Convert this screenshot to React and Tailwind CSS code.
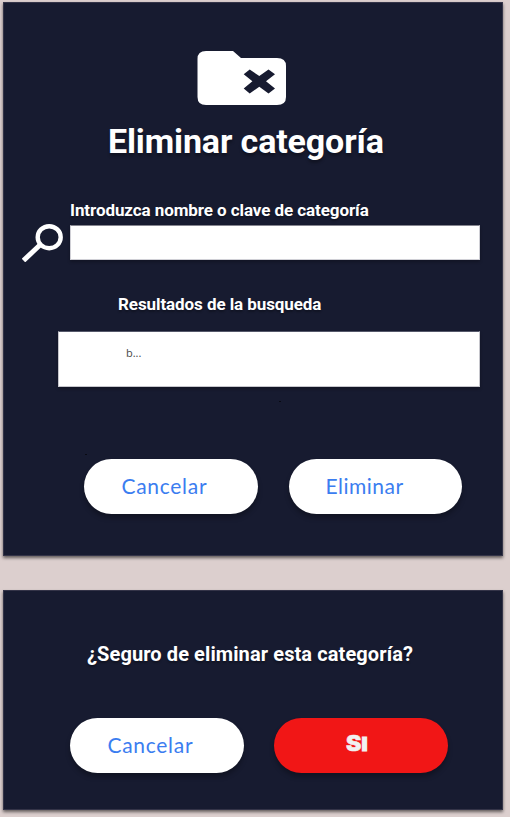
const panel =
  "w-[500px] bg-[#171b30] border border-[#343448] shadow-[0_2px_3px_rgba(0,0,0,0.55)]";
const pill =
  "h-[55px] w-[173.500px] rounded-full text-left shadow-[0_4px_5px_rgba(0,0,0,0.28)]";
const pillText =
  "font-['Lato'] text-[21px] leading-[54px] pb-[2px] text-[#3b7df0]";

function FolderIcon() {
  return (
    <svg className="ml-[193px] mt-[48px] block h-[54px] w-[90px]" viewBox="0 0 90 54">
      <path
        d="M9 0H36L44 7H80Q89 7 89 15V46Q89 54 80 54H9Q0.500 54 0.500 46V8Q0.500 0 9 0Z"
        fill="#fff"
      />
      <path
        d="M46.700 23.300L52.700 18.500L62.300 25L71.500 18.500L78 23.300L69 30.300L78 37.500L71.500 42.500L62.300 35.800L52.700 42.500L46.700 37.500L55.400 30.300Z"
        fill="#171b30"
      />
    </svg>
  );
}

function SearchIcon() {
  return (
    <svg className="mt-[2px] block h-[38px] w-[42px]" viewBox="0 0 42 38" fill="none" stroke="#fff">
      <ellipse cx="27.200" cy="13.200" rx="11.500" ry="11" strokeWidth="4.400" />
      <path d="M18.500 20.500L1.500 36.500" strokeWidth="5" />
    </svg>
  );
}

export default function App() {
  return (
    <main className="h-[817px] w-[510px] overflow-hidden bg-[#dccfce] pl-[3px] pt-[2px] font-['Roboto',sans-serif] text-white">
      <section className={`${panel} relative h-[554px]`}>
        <FolderIcon />
        <h1 className="ml-[104px] mt-[16px] whitespace-nowrap text-[34px] font-bold leading-[40px] tracking-[-0.13px] [text-shadow:0_3px_3px_rgba(0,0,0,0.3)]">
          Eliminar categoría
        </h1>
        <label
          htmlFor="clave"
          className="ml-[66px] mt-[39px] block whitespace-nowrap text-[17px] font-bold leading-[20px] tracking-[-0.08px] [text-shadow:0_2px_2px_rgba(0,0,0,0.3)]"
        >
          Introduzca nombre o clave de categoría
        </label>
        <div className="ml-[18px] mt-[2px] flex">
          <SearchIcon />
          <input
            id="clave"
            className="ml-[6px] mt-[3px] h-[35px] w-[410px] border border-[#d0d0d6] border-t-[#85858f] bg-white shadow-[0_2px_3px_rgba(0,0,0,0.25)]"
          />
        </div>
        <h2 className="ml-[114px] mt-[32px] whitespace-nowrap text-[17px] font-bold leading-[20px] tracking-[-0.08px] [text-shadow:0_2px_2px_rgba(0,0,0,0.3)]">
          Resultados de la busqueda
        </h2>
        <div className="ml-[54px] mt-[17px] h-[56px] w-[422px] border border-[#c6c6cc] border-t-[#55586a] bg-white pl-[67px] pt-[12px] font-['Open_Sans'] text-[11px] leading-[18px] text-[#494949] shadow-[0_2px_3px_rgba(0,0,0,0.25)]">
          b...
        </div>
        <div className="ml-[80px] mt-[72px] flex gap-[31px]">
          <button className={`${pill} ${pillText} bg-white pl-[37.500px] tracking-[0.7px]`}>Cancelar</button>
          <button className={`${pill} ${pillText} bg-white pl-[37px] tracking-[0.5px]`}>Eliminar</button>
        </div>
        <span className="absolute left-[275px] top-[398px] h-px w-[2px] bg-black/60" />
        <span className="absolute left-[81px] top-[451px] h-px w-[2px] bg-black/60" />
      </section>

      <section className={`${panel} mt-[34px] h-[220px]`}>
        <h2 className="ml-[83px] mt-[50px] whitespace-nowrap text-[20px] font-bold leading-[26px] tracking-[0.1px] [text-shadow:0_2px_2px_rgba(0,0,0,0.3)]">
          ¿Seguro de eliminar esta categoría?
        </h2>
        <div className="ml-[66px] mt-[51px] flex gap-[30.500px]">
          <button className={`${pill} ${pillText} bg-white pl-[37.500px] tracking-[0.7px]`}>Cancelar</button>
          <button
            className={`${pill} bg-[#f11616] pb-[3px] pl-[72px] font-['Inter'] text-[21px] font-black leading-[51px] text-[#f1f1f1]`}
          >
            <span className="inline-block origin-left scale-x-[1.1] [-webkit-text-stroke:0.500px_#f1f1f1]">
              S<span className="text-[19px] [-webkit-text-stroke:1px_#f1f1f1]">I</span>
            </span>
          </button>
        </div>
      </section>
    </main>
  );
}
